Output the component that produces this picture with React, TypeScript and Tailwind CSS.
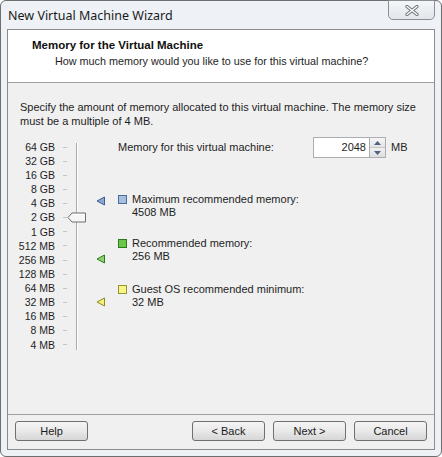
import React from "react";

const scale = [
  "64 GB",
  "32 GB",
  "16 GB",
  "8 GB",
  "4 GB",
  "2 GB",
  "1 GB",
  "512 MB",
  "256 MB",
  "128 MB",
  "64 MB",
  "32 MB",
  "16 MB",
  "8 MB",
  "4 MB",
];

const Marker = ({ top, fill, stroke }: { top: string; fill: string; stroke: string }) => (
  <svg className={`absolute left-[76px] ${top}`} width="10" height="10" viewBox="0 0 10 10">
    <path d="M1 5 L8.5 1 L8.5 9 Z" fill={fill} stroke={stroke} strokeWidth="1" strokeLinejoin="round" />
  </svg>
);

const Legend = ({ color, border, title, value, className }: { color: string; border: string; title: string; value: string; className: string }) => (
  <div className={`flex gap-[5px] ${className}`}>
    <div className={`w-[9px] h-[9px] mt-[2px] border ${color} ${border}`} />
    <div className="leading-[13px]">
      <div>{title}</div>
      <div>{value}</div>
    </div>
  </div>
);

const Button = ({ children }: { children: React.ReactNode }) => (
  <button className="w-[73px] h-[20px] rounded-[3px] border border-[#707070] bg-gradient-to-b from-[#f4f4f4] via-[#e9e9e9] to-[#d6d6d6] text-[11px] text-[#1a1a1a] leading-none">
    {children}
  </button>
);

export default function App() {
  return (
    <div
      className="w-[442px] h-[457px] bg-[#eef2f6] border border-[#6e6e6e] rounded-[6px] flex flex-col text-[#1e1e1e]"
      style={{ fontFamily: '"Liberation Sans", Arial, sans-serif' }}
    >
      {/* Title bar */}
      <div className="h-[28px] flex items-start justify-between shrink-0">
        <div className="pl-[7px] pt-[6px] text-[12.5px] text-[#1a1a1a]" style={{ fontFamily: '"Noto Sans", sans-serif' }}>
          New Virtual Machine Wizard
        </div>
        <div className="mr-[6px] -mt-px w-[47px] h-[20px] border border-[#8a8f96] rounded-b-[5px] bg-gradient-to-b from-[#f4f6f8] to-[#e2e6ea] flex items-center justify-center">
          <svg width="14" height="11" viewBox="0 0 14 11">
            <path d="M2 1.5 L12 9.5 M12 1.5 L2 9.5" stroke="#6a6f75" strokeWidth="3.2" strokeLinecap="round" />
            <path d="M2 1.5 L12 9.5 M12 1.5 L2 9.5" stroke="#ffffff" strokeWidth="1.4" strokeLinecap="round" />
          </svg>
        </div>
      </div>

      {/* Content area */}
      <div className="mx-[6px] h-[421px] border border-[#8c8c8c] bg-[#f0f0f0] flex flex-col text-[11px]">
        <div className="h-[53px] bg-white border-b border-[#a0a0a0] shrink-0 pt-[8px]">
          <div className="pl-[24px] font-bold text-[11.5px] leading-[14px] text-[#111]">Memory for the Virtual Machine</div>
          <div className="pl-[47px] mt-[2px] leading-[14px] text-[10.8px]">How much memory would you like to use for this virtual machine?</div>
        </div>

        <div className="flex-1 pl-[12px] pt-[17px]">
          <p className="leading-[14px] w-[400px]">
            Specify the amount of memory allocated to this virtual machine. The memory size must be a multiple of 4 MB.
          </p>

          <div className="relative mt-[12px] flex">
            {/* Scale */}
            <div className="flex flex-col">
              {scale.map((s) => (
                <div key={s} className="h-[14.14px] flex items-center">
                  <div className="w-[35px] flex justify-end whitespace-nowrap leading-none text-[10.5px]">{s}</div>
                  <div className="ml-[8px] w-[4px] h-px bg-[#c6c6c6]" />
                </div>
              ))}
            </div>
            <div className="ml-[9px] mt-[3px] h-[207px] w-[2px] border-l border-[#a8a8a8] bg-white" />

            {/* Thumb */}
            <svg className="absolute left-[47px] top-[72px]" width="20" height="11" viewBox="0 0 20 11">
              <path d="M1 5.5 L5 1 L18.5 1 L18.5 10 L5 10 Z" fill="#f6f6f6" stroke="#6f6f6f" strokeWidth="1" strokeLinejoin="round" />
              <path d="M6 2.5 L17 2.5" stroke="#ffffff" strokeWidth="1" />
            </svg>

            <Marker top="top-[56px]" fill="#8ca9d4" stroke="#3f5f8e" />
            <Marker top="top-[114px]" fill="#8fd36e" stroke="#2e7a1c" />
            <Marker top="top-[157px]" fill="#f5f17c" stroke="#8e8a20" />

            {/* Right side */}
            <div className="ml-[40px] flex flex-col">
              <div className="flex items-center -mt-[3px] h-[21px]">
                <div className="w-[195px]">Memory for this virtual machine:</div>
                <div className="w-[57px] h-[21px] bg-white border border-[#abadb3] flex items-center justify-end pr-[3px]">2048</div>
                <div className="w-[16px] h-[21px] flex flex-col border border-l-0 border-[#abadb3]">
                  <div className="flex-1 border-b border-[#c8c8c8] bg-gradient-to-b from-[#f6f6f6] to-[#e4e4e4] flex items-center justify-center">
                    <svg width="7" height="4" viewBox="0 0 7 4"><path d="M0 4 L3.5 0 L7 4 Z" fill="#4d6185" /></svg>
                  </div>
                  <div className="flex-1 bg-gradient-to-b from-[#f0f0f0] to-[#dedede] flex items-center justify-center">
                    <svg width="7" height="4" viewBox="0 0 7 4"><path d="M0 0 L3.5 4 L7 0 Z" fill="#4d6185" /></svg>
                  </div>
                </div>
                <div className="ml-[5px]">MB</div>
              </div>

              <Legend className="mt-[35px]" color="bg-[#a7bedf]" border="border-[#4b6b9a]" title="Maximum recommended memory:" value="4508 MB" />
              <Legend className="mt-[18px]" color="bg-[#6cc64a]" border="border-[#2c7a1c]" title="Recommended memory:" value="256 MB" />
              <Legend className="mt-[20px]" color="bg-[#f7f48a]" border="border-[#9a9430]" title="Guest OS recommended minimum:" value="32 MB" />
            </div>
          </div>
        </div>

        {/* Footer */}
        <div className="h-[35px] shrink-0 border-t border-[#a0a0a0] flex items-center px-[7px] pb-[2px]">
          <Button>Help</Button>
          <div className="flex-1" />
          <div className="flex gap-[8px]">
            <Button>&lt; Back</Button>
            <Button>Next &gt;</Button>
            <Button>Cancel</Button>
          </div>
        </div>
      </div>
    </div>
  );
}
